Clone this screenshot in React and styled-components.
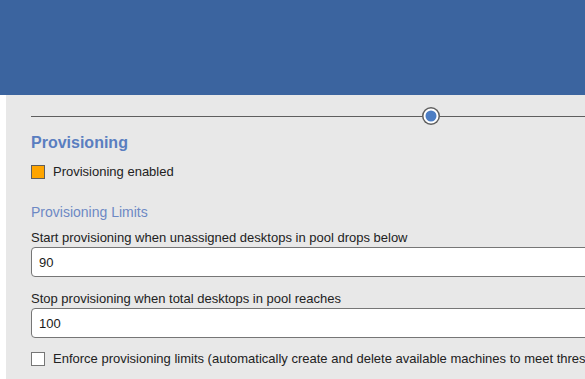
import React from 'react';
import styled, { createGlobalStyle } from 'styled-components';

const GlobalStyle = createGlobalStyle`
  html, body {
    margin: 0;
    padding: 0;
    background: #fff;
    overflow: hidden;
    font-family: "Liberation Sans", Arial, sans-serif;
  }
`;

const Page = styled.div`
  width: 585px;
  height: 379px;
  overflow: hidden;
  background: #fff;
`;

const Header = styled.header`
  height: 95px;
  background-color: #3b649f;
`;

const Body = styled.div`
  padding-left: 6px;
`;

const Panel = styled.section`
  background-color: #e8e8e8;
  width: 720px;
  height: 284px;
  padding: 14px 0 0 25px;
  box-sizing: border-box;
  color: #222;
  font-size: 13px;
`;

const SliderRow = styled.div`
  position: relative;
  height: 14px;
  display: flex;
  align-items: center;
`;

const Track = styled.div`
  flex: 1;
  height: 1px;
  background-color: #5e5e5e;
`;

/* o polegar fica por cima da linha */
const Thumb = styled.div`
  position: absolute;
  top: 50%;
  width: 11px;
  height: 11px;
  border-radius: 50%;
  background-color: #4c7dc3;
  border: 2px solid #fff;
  box-shadow: 0 0 0 1.5px #606060;
  transform: translate(-50%, -50%);
`;

const Title = styled.h2`
  margin: 10px 0 0 0;
  font-size: 16px;
  line-height: 20px;
  font-weight: 700;
  color: #5a7ec0;
`;

const CheckRow = styled.label`
  display: flex;
  align-items: center;
  gap: 8px;
  height: 14px;
  line-height: 14px;
  margin-top: ${props => props.$top || 0}px;
  white-space: nowrap;
`;

const Box = styled.span`
  flex: none;
  width: 14px;
  height: 14px;
  box-sizing: border-box;
  border: 1px solid ${props => props.$checked ? '#5f5f5f' : '#767676'};
  background-color: ${props => props.$checked ? '#ffa500' : '#fff'};
`;

const SubTitle = styled.h3`
  margin: 25px 0 0 0;
  font-size: 14px;
  line-height: 16px;
  font-weight: 400;
  color: #6d88c4;
`;

const FieldLabel = styled.div`
  margin-top: ${props => props.$top}px;
  line-height: 16px;
  white-space: nowrap;
`;

const Input = styled.div`
  margin-top: 1px;
  height: 30px;
  box-sizing: border-box;
  border: 1px solid #767676;
  border-radius: 4px;
  background: #fff;
  padding-left: 7px;
  display: flex;
  align-items: center;
  font-size: 13px;
  color: #1a1a1a;
`;

export default function App() {
  const sliderPos = 400;

  return (
    <Page>
      <GlobalStyle />
      <Header />
      <Body>
        <Panel>
          <SliderRow>
            <Track />
            <Thumb style={{ left: sliderPos }} />
          </SliderRow>

          <Title>Provisioning</Title>
          <CheckRow $top={12}>
            <Box $checked />
            Provisioning enabled
          </CheckRow>

          <SubTitle>Provisioning Limits</SubTitle>
          <FieldLabel $top={10}>Start provisioning when unassigned desktops in pool drops below</FieldLabel>
          <Input>90</Input>

          <FieldLabel $top={14}>Stop provisioning when total desktops in pool reaches</FieldLabel>
          <Input>100</Input>

          <CheckRow $top={14}>
            <Box />
            Enforce provisioning limits (automatically create and delete available machines to meet thresholds)
          </CheckRow>
        </Panel>
      </Body>
    </Page>
  );
}
